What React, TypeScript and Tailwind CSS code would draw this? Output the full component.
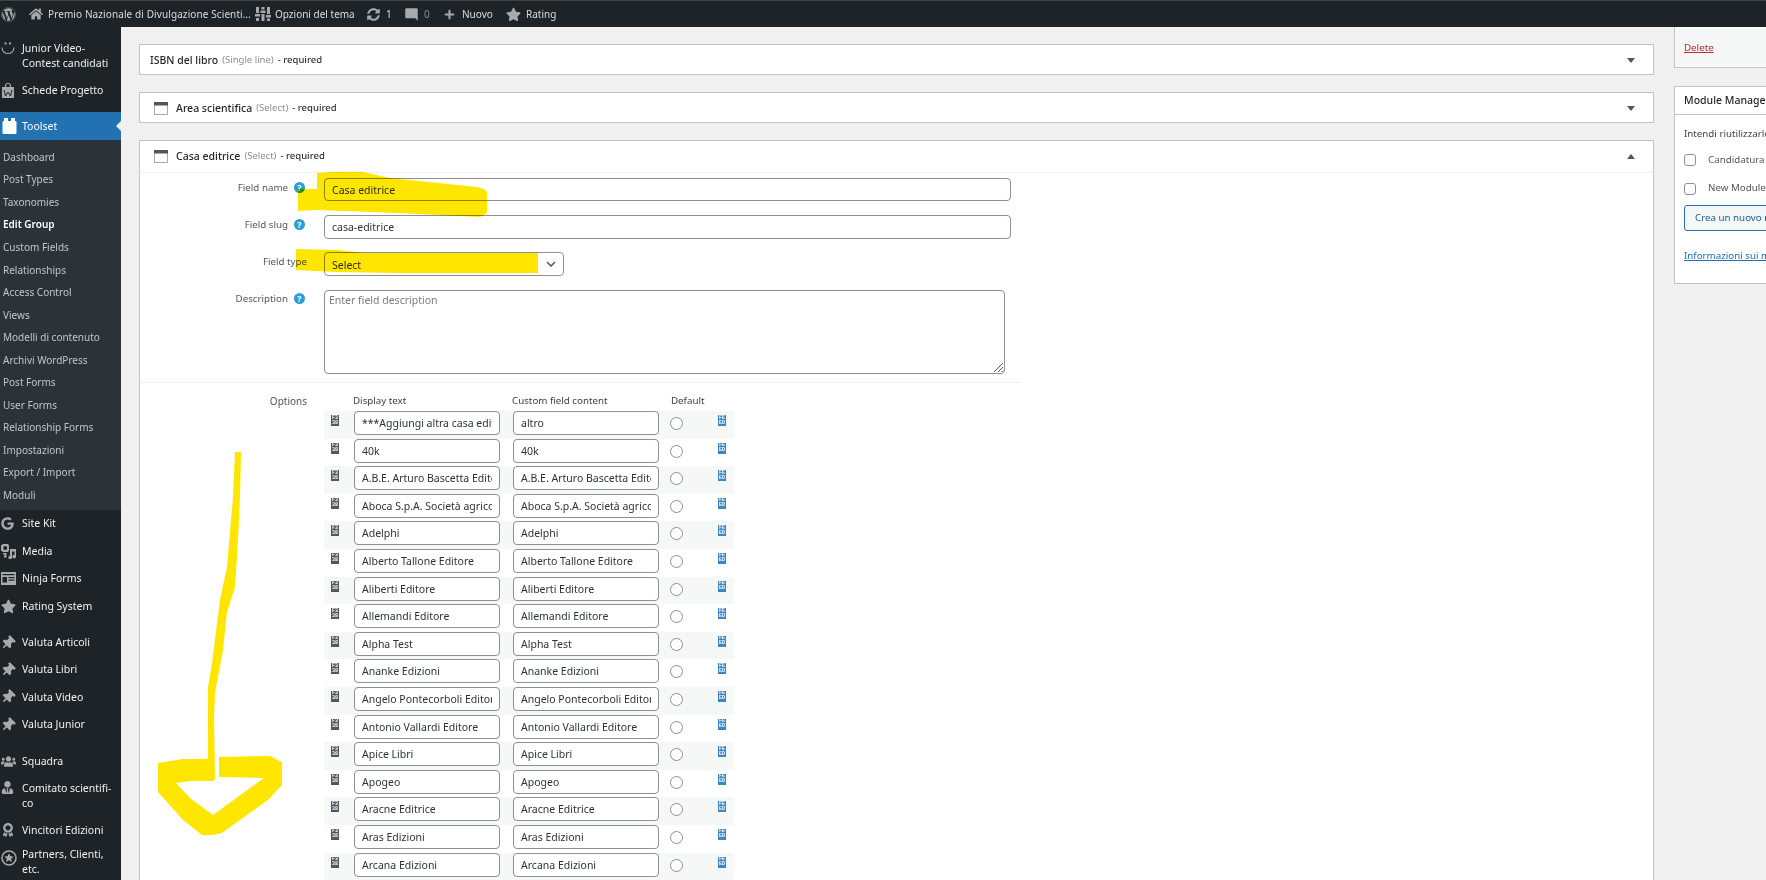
import type { ReactNode } from "react";
import { FaWordpress, FaHome, FaStar, FaPlus, FaSyncAlt, FaThumbtack, FaGoogle, FaUsers, FaUserTie, FaAward } from "react-icons/fa";
import { MdModeComment } from "react-icons/md";

const font = { fontFamily: '"Noto Sans", "Open Sans", sans-serif' };
const mono = { fontFamily: '"Liberation Mono", monospace' };

const submenu = [
  "Dashboard",
  "Post Types",
  "Taxonomies",
  "Edit Group",
  "Custom Fields",
  "Relationships",
  "Access Control",
  "Views",
  "Modelli di contenuto",
  "Archivi WordPress",
  "Post Forms",
  "User Forms",
  "Relationship Forms",
  "Impostazioni",
  "Export / Import",
  "Moduli",
];

const options = [
  ["***Aggiungi altra casa editrice", "altro"],
  ["40k", "40k"],
  ["A.B.E. Arturo Bascetta Editore", "A.B.E. Arturo Bascetta Editore"],
  ["Aboca S.p.A. Società agricola", "Aboca S.p.A. Società agricola"],
  ["Adelphi", "Adelphi"],
  ["Alberto Tallone Editore", "Alberto Tallone Editore"],
  ["Aliberti Editore", "Aliberti Editore"],
  ["Allemandi Editore", "Allemandi Editore"],
  ["Alpha Test", "Alpha Test"],
  ["Ananke Edizioni", "Ananke Edizioni"],
  ["Angelo Pontecorboli Editore", "Angelo Pontecorboli Editore"],
  ["Antonio Vallardi Editore", "Antonio Vallardi Editore"],
  ["Apice Libri", "Apice Libri"],
  ["Apogeo", "Apogeo"],
  ["Aracne Editrice", "Aracne Editrice"],
  ["Aras Edizioni", "Aras Edizioni"],
  ["Arcana Edizioni", "Arcana Edizioni"],
];

function SliderIcon() {
  return (
    <svg width="16" height="16" viewBox="0 0 16 16" fill="#a7aaad">
      <rect x="1" y="1" width="3" height="6" />
      <rect x="0" y="8" width="5" height="2.5" />
      <rect x="1" y="12" width="3" height="3" />
      <rect x="6.5" y="1" width="3" height="2.5" />
      <rect x="5.5" y="4.5" width="5" height="2.5" />
      <rect x="6.5" y="8" width="3" height="7" />
      <rect x="12" y="1" width="3" height="7" />
      <rect x="11" y="9" width="5" height="2.5" />
      <rect x="12" y="12.5" width="3" height="2.5" />
    </svg>
  );
}

function SmileIcon() {
  return (
    <svg width="14" height="14" viewBox="0 0 14 14" fill="none" stroke="#a7aaad">
      <path d="M1 6.5c0 3.5 2.6 6 6 6s6-2.500 6-6" strokeWidth="1.200" />
      <rect x="3.500" y="1.500" width="2" height="2" fill="#a7aaad" stroke="none" />
      <rect x="8" y="1.500" width="2" height="2" fill="#a7aaad" stroke="none" />
    </svg>
  );
}

function BagIcon() {
  return (
    <svg width="14" height="15" viewBox="0 0 14 15" fill="#a7aaad">
      <path d="M1 4h3V2.500C4 1 5 0 7 0s3 1 3 2.500V4h3v11H1zM5.200 4h3.600V2.500C8.800 1.600 8 1.100 7 1.100s-1.800.5-1.800 1.400z" />
      <path d="M3 7l1.500 6 2.500-4 2.500 4L11 7" fill="none" stroke="#1d2327" strokeWidth="1" />
    </svg>
  );
}

function BlockIcon() {
  return (
    <svg width="15" height="16" viewBox="0 0 15 16" fill="#ffffff">
      <rect x="0.500" y="3" width="14" height="13" rx="1" />
      <rect x="2" y="0" width="4" height="4" />
      <rect x="9" y="0" width="4" height="4" />
    </svg>
  );
}

function MediaIcon() {
  return (
    <svg width="15" height="15" viewBox="0 0 15 15" fill="#a7aaad">
      <path d="M0 1.500 2 0h5l1 1.500v5L7 8H2L0 6.500z" />
      <circle cx="4.200" cy="4" r="2" fill="#1d2327" />
      <path d="M9 5h6v7.500a1.800 1.800 0 1 1-1.500-1.700V7.500H11v6a1.800 1.800 0 1 1-2-1.700z" />
      <path d="M2 9h3.500v3.500a1.300 1.300 0 1 1-1.300-1.300H4V10.500H2z" />
    </svg>
  );
}

function FormIcon() {
  return (
    <svg width="15" height="13" viewBox="0 0 15 13">
      <rect width="15" height="13" fill="#a7aaad" />
      <rect x="1.500" y="2" width="12" height="1.200" fill="#1d2327" />
      <rect x="1.500" y="5" width="4.500" height="5.500" fill="#1d2327" />
      <rect x="7.500" y="5" width="6" height="1.200" fill="#1d2327" />
      <rect x="7.500" y="7.500" width="6" height="1.200" fill="#1d2327" />
    </svg>
  );
}

function StarCircleIcon() {
  return (
    <svg width="16" height="16" viewBox="0 0 16 16">
      <circle cx="8" cy="8" r="7" fill="none" stroke="#a7aaad" strokeWidth="1.500" />
      <path d="M8 3.200l1.400 3 3.200.3-2.400 2.200.7 3.200L8 10.300l-2.900 1.600.7-3.200-2.400-2.200 3.200-.3z" fill="#a7aaad" />
    </svg>
  );
}

function WindowIcon() {
  return (
    <svg width="14" height="13" viewBox="0 0 14 13">
      <rect x="0.500" y="0.500" width="13" height="12" fill="#fff" stroke="#a7aaad" />
      <rect width="14" height="3.500" fill="#50575e" />
    </svg>
  );
}

// the missing icon font shows up as little hex boxes in the screenshot
function HexBox({ top, bottom, className }: { top: string; bottom: string; className: string }) {
  return (
    <span
      className={`flex h-[11px] w-[8px] flex-col items-center justify-center text-[5px] leading-[5px] font-bold text-white ${className}`}
      style={mono}
    >
      <span>{top}</span>
      <span>{bottom}</span>
    </span>
  );
}

function HelpDot() {
  return (
    <span className="-mt-[2px] flex h-[11px] w-[11px] items-center justify-center rounded-full bg-[#2a9fd6] text-[9px] font-bold leading-none text-white">
      ?
    </span>
  );
}

function AdminBar() {
  return (
    <div className="flex h-[27px] shrink-0 items-center border-t border-[#3c434a] bg-[#1d2327] text-[10px] text-[#dcdcde]">
      <FaWordpress className="ml-px h-[15px] w-[15px] text-[#a7aaad]" />
      <FaHome className="ml-[13px] h-[14px] w-[14px] text-[#a7aaad]" />
      <span className="ml-[5px] w-[199px] whitespace-nowrap tracking-[0.1px]">Premio Nazionale di Divulgazione Scienti…</span>
      <span className="ml-[8px] flex items-center">
        <SliderIcon />
      </span>
      <span className="ml-[4px] w-[80px] whitespace-nowrap">Opzioni del tema</span>
      <FaSyncAlt className="ml-[12px] h-[13px] w-[13px] text-[#a7aaad]" />
      <span className="ml-[6px] w-[8px]">1</span>
      <MdModeComment className="ml-[10px] h-[15px] w-[15px] text-[#a7aaad]" />
      <span className="ml-[5px] w-[8px] text-[#8c8f94]">0</span>
      <FaPlus className="ml-[12px] h-[11px] w-[11px] text-[#a7aaad]" />
      <span className="ml-[7px] w-[31px]">Nuovo</span>
      <FaStar className="ml-[13px] h-[15px] w-[15px] text-[#a7aaad]" />
      <span className="ml-[5px]">Rating</span>
    </div>
  );
}

function MenuItem({ icon, lines, height }: { icon: ReactNode; lines: string[]; height: string }) {
  return (
    <div className={`flex items-center text-[10.5px] leading-[15px] text-[#f0f0f1] ${height}`}>
      <span className={`flex w-[22px] shrink-0 justify-start pl-px text-[#a7aaad] ${lines.length > 1 ? "mt-[6px] self-start" : ""}`}>{icon}</span>
      <span>
        {lines.map((line) => (
          <span key={line} className="block whitespace-nowrap">
            {line}
          </span>
        ))}
      </span>
    </div>
  );
}

function Sidebar() {
  const pin = <FaThumbtack className="h-[14px] w-[14px] rotate-45" />;
  return (
    <div className="w-[121px] shrink-0 overflow-hidden bg-[#1d2327]">
      <div className="pt-[8px]">
        <MenuItem icon={<SmileIcon />} lines={["Junior Video-", "Contest candidati"]} height="h-[41px]" />
        <MenuItem icon={<BagIcon />} lines={["Schede Progetto"]} height="h-[28px]" />
      </div>
      <div className="relative mt-[8px] flex h-[28px] items-center bg-[#2271b1] text-[10.5px] text-white">
        <span className="flex w-[22px] justify-start pl-[2px]">
          <BlockIcon />
        </span>
        <span className="pt-[2px]">Toolset</span>
        <span className="absolute right-0 top-[9px] h-0 w-0 border-y-[5px] border-r-[5px] border-y-transparent border-r-[#f0f0f1]" />
      </div>
      <div className="flex h-[370px] flex-col bg-[#2c3338] pl-[3px] pt-[6px]">
        {submenu.map((item) => (
          <div
            key={item}
            className={`flex h-[22.55px] items-center text-[10px] ${item === "Edit Group" ? "font-semibold text-white" : "text-[#c3c4c7]"}`}
          >
            {item}
          </div>
        ))}
      </div>
      <MenuItem icon={<FaGoogle className="h-[13px] w-[13px]" />} lines={["Site Kit"]} height="h-[27px]" />
      <MenuItem icon={<MediaIcon />} lines={["Media"]} height="h-[28px]" />
      <MenuItem icon={<FormIcon />} lines={["Ninja Forms"]} height="h-[27px]" />
      <MenuItem icon={<FaStar className="h-[15px] w-[15px]" />} lines={["Rating System"]} height="h-[28px]" />
      <MenuItem icon={pin} lines={["Valuta Articoli"]} height="mt-[9px] h-[27px]" />
      <MenuItem icon={pin} lines={["Valuta Libri"]} height="h-[27px]" />
      <MenuItem icon={pin} lines={["Valuta Video"]} height="h-[28px]" />
      <MenuItem icon={pin} lines={["Valuta Junior"]} height="h-[27px]" />
      <MenuItem icon={<FaUsers className="h-[15px] w-[15px]" />} lines={["Squadra"]} height="mt-[9px] h-[28px]" />
      <MenuItem icon={<FaUserTie className="h-[13px] w-[13px]" />} lines={["Comitato scientifi-", "co"]} height="h-[41px]" />
      <MenuItem icon={<FaAward className="h-[14px] w-[14px]" />} lines={["Vincitori Edizioni"]} height="h-[28px]" />
      <MenuItem icon={<StarCircleIcon />} lines={["Partners, Clienti,", "etc."]} height="h-[36px]" />
    </div>
  );
}

function PanelHeader({ name, type, icon, open }: { name: string; type: string; icon: boolean; open?: boolean }) {
  return (
    <div className={`flex items-center text-[9.5px] ${open ? "h-[32px] border-b border-[#f0f0f1]" : "h-[29px] pt-[2px]"}`}>
      {icon ? (
        <span className="ml-[14px] mr-[8px] flex">
          <WindowIcon />
        </span>
      ) : (
        <span className="ml-[10px]" />
      )}
      <span className="mr-[4px] text-[10.5px] font-medium text-[#1d2327]">{name}</span>
      <span className="mr-[4px] text-[9.5px] text-[#8c8f94]">({type})</span>
      <span className="font-medium text-[#2c3338]">- required</span>
      <span
        className={`ml-auto mr-[18px] h-0 w-0 border-x-[4px] border-x-transparent ${open ? "border-b-[5px] border-b-[#50575e]" : "border-t-[5px] border-t-[#50575e]"}`}
      />
    </div>
  );
}

function FieldLabel({ text, help }: { text: string; help?: boolean }) {
  return (
    <div className={`flex w-[167px] shrink-0 items-center justify-end pb-[3px] text-[9.75px] text-[#50575e] ${help ? "pr-[2px]" : ""}`}>
      <span className="whitespace-nowrap">{text}</span>
      {help ? (
        <span className="ml-[6px] flex w-[11px]">
          <HelpDot />
        </span>
      ) : null}
    </div>
  );
}

function OptionRow({ label, value, index }: { label: string; value: string; index: number }) {
  return (
    <div className={`flex h-[27.6px] w-[410px] items-start ${index % 2 === 0 ? "bg-[#f6f7f7]" : "bg-white"}`}>
      <span className="ml-[7px] mt-[4px] flex w-[23px]">
        <HexBox top="F3" bottom="38" className="bg-[#50575e]" />
      </span>
      <input
        readOnly
        value={label}
        className="h-[24px] w-[146px] rounded border border-[#8c8f94] bg-white px-[7px] text-[10.5px] text-[#2c3338] outline-none"
      />
      <input
        readOnly
        value={value}
        className="ml-[13px] h-[24px] w-[146px] rounded border border-[#8c8f94] bg-white px-[7px] text-[10.5px] text-[#2c3338] outline-none"
      />
      <span className="ml-[11px] mt-[6px] h-[13px] w-[13px] rounded-full border border-[#8c8f94] bg-white" />
      <span className="ml-[35px] mt-[4px] flex">
        <HexBox top="FE" bottom="ED" className="bg-[#3d86bf]" />
      </span>
    </div>
  );
}

function CasaPanel() {
  return (
    <div className="border border-[#c3c4c7] bg-white">
      <PanelHeader name="Casa editrice" type="Select" icon open />
      <div className="w-[881px] border-b border-[#f0f0f1] pb-[8px]">
        <div className="mt-[5px] flex h-[23px]">
          <FieldLabel text="Field name" help />
          <input
            readOnly
            value="Casa editrice"
            className="ml-[17px] w-[687px] rounded border border-[#8c8f94] px-[7px] pt-[2px] text-[10.5px] text-[#2c3338] outline-none"
          />
        </div>
        <div className="mt-[14px] flex h-[24px]">
          <FieldLabel text="Field slug" help />
          <input
            readOnly
            value="casa-editrice"
            className="ml-[17px] w-[687px] rounded border border-[#8c8f94] px-[7px] pt-px text-[10.5px] text-[#2c3338] outline-none"
          />
        </div>
        <div className="mt-[13px] flex h-[24px]">
          <FieldLabel text="Field type" />
          <div className="ml-[17px] flex w-[240px] items-center justify-between rounded border border-[#8c8f94] px-[7px] text-[10.5px] text-[#2c3338]">
            <span className="pt-[3px]">Select</span>
            <svg width="10" height="6" viewBox="0 0 10 6" fill="none" stroke="#50575e" strokeWidth="1.500">
              <path d="M1 1l4 4 4-4" />
            </svg>
          </div>
        </div>
        <div className="mt-[14px] flex h-[84px]">
          <div className="flex h-[18px] w-[167px] items-center justify-end pr-[2px] text-[9.75px] text-[#50575e]">
            Description
            <span className="ml-[6px] flex">
              <HelpDot />
            </span>
          </div>
          <div className="relative ml-[17px] w-[681px] rounded border border-[#8c8f94] px-[4px] py-[2px] text-[10.5px] text-[#787c82]">
            Enter field description
            <svg className="absolute bottom-0 right-0" width="12" height="12" viewBox="0 0 12 12" stroke="#50575e">
              <path d="M11 2L2 11M11 6L6 11M11 9.500L9.500 11" />
            </svg>
          </div>
        </div>
      </div>
      <div className="flex pt-[9px]">
        <div className="flex h-[18px] w-[167px] items-center justify-end text-[10px] text-[#50575e]">Options</div>
        <div className="ml-[17px]">
          <div className="flex h-[19px] items-center text-[9.75px] text-[#3c434a]">
            <span className="ml-[29px] w-[159px]">Display text</span>
            <span className="w-[159px]">Custom field content</span>
            <span>Default</span>
          </div>
          {options.map(([label, value], index) => (
            <OptionRow key={label} label={label} value={value} index={index} />
          ))}
        </div>
      </div>
    </div>
  );
}

function SideBoxes() {
  return (
    <div className="w-[112px] shrink-0 overflow-hidden">
      <div className="flex h-[41px] w-[200px] items-center border border-t-0 border-[#c3c4c7] bg-[#f6f7f7] pl-[9px] pt-[2px] text-[9.75px] text-[#b32d2e] underline">
        Delete
      </div>
      <div className="mt-[18px] h-[198px] w-[200px] border border-[#c3c4c7] bg-white text-[9.75px]">
        <div className="flex h-[28px] items-center border-b border-[#c3c4c7] pl-[9px] text-[10.5px] font-medium whitespace-nowrap text-[#1d2327]">Module Manager</div>
        <div className="pl-[9px]">
          <div className="mt-[12px] whitespace-nowrap text-[#3c434a]">Intendi riutilizzarlo in altri moduli?</div>
          <div className="mt-[11px] flex items-center text-[#50575e]">
            <span className="mr-[12px] h-[12px] w-[12px] rounded-[3px] border border-[#8c8f94]" />
            Candidatura
          </div>
          <div className="mt-[14px] flex items-center text-[#50575e]">
            <span className="mr-[12px] h-[12px] w-[12px] rounded-[3px] border border-[#8c8f94]" />
            New Module
          </div>
          <div className="mt-[9px] flex h-[26px] w-[180px] items-center rounded-[3px] border border-[#2271b1] bg-[#f6f7f7] pl-[10px] whitespace-nowrap text-[#135e96]">
            Crea un nuovo modulo
          </div>
          <div className="mt-[18px] whitespace-nowrap text-[#2271b1] underline">Informazioni sui moduli</div>
        </div>
      </div>
    </div>
  );
}

function Scribbles() {
  return (
    <svg className="pointer-events-none absolute left-0 top-0 mix-blend-multiply" width="1766" height="880" viewBox="0 0 1766 880" fill="#ffe600">
      <path d="M317 173Q340 171 363 172L390 178L477 187Q487 189 487 193V213L480 217L397 213L317 210L298 211V189H317Z" />
      <path d="M296 249L337 250L363 253H538V273H397L337 272L296 270Z" />
      <path d="M235 452H241L240 497L238 540L235 587L227 612L223 650L215 693L214 717L215 778Q215 781 212 781H190L176 783L190 798L213 815L264 778L219 777V757L270 756L282 762V785L268 800L222 833Q212 836 202 835L183 820L158 792V763L183 759H205Q208 759 208 757V687L212 663L220 600L227 567L233 497Z" />
    </svg>
  );
}

export default function App() {
  return (
    <div className="relative flex h-[880px] w-[1766px] flex-col overflow-hidden bg-[#f0f0f1]" style={font}>
      <AdminBar />
      <div className="flex min-h-0 flex-1">
        <Sidebar />
        <div className="flex min-w-0 flex-1 gap-[20px] pl-[18px]">
          <div className="flex w-[1515px] shrink-0 flex-col gap-[17px] pt-[17px]">
            <div className="border border-[#c3c4c7] bg-white">
              <PanelHeader name="ISBN del libro" type="Single line" icon={false} />
            </div>
            <div className="border border-[#c3c4c7] bg-white">
              <PanelHeader name="Area scientifica" type="Select" icon />
            </div>
            <CasaPanel />
          </div>
          <SideBoxes />
        </div>
      </div>
      <Scribbles />
    </div>
  );
}
